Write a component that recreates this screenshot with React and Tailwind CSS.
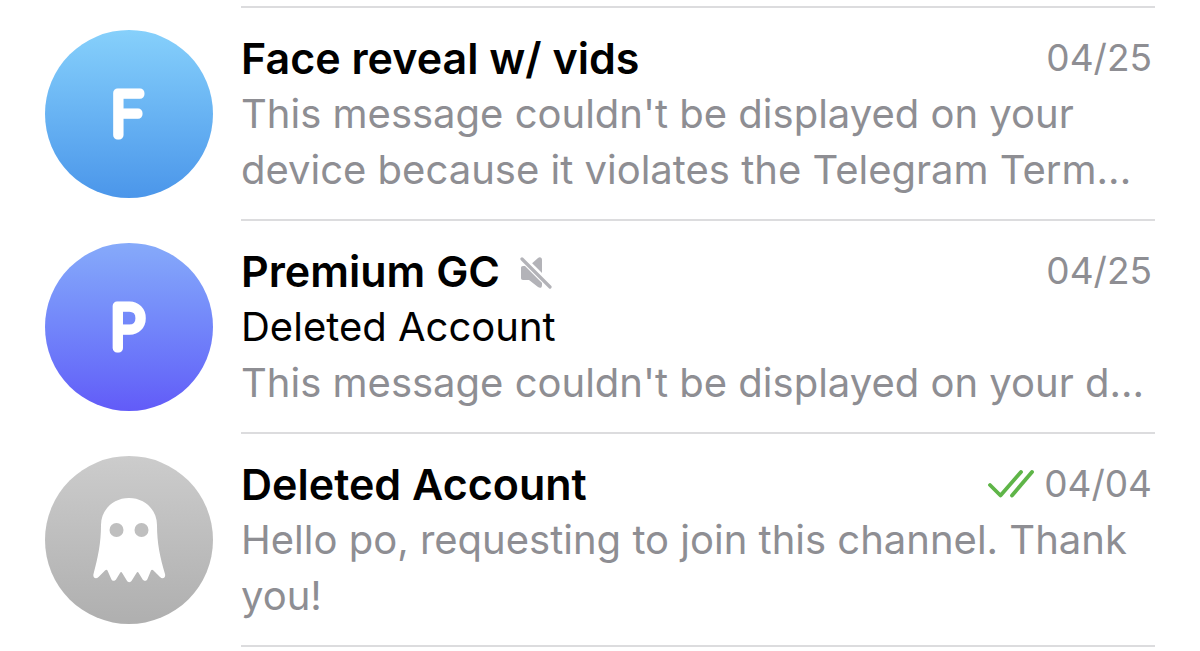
import React from "react";

const CHATS = [
  {
    id: 1,
    title: "Face reveal w/ vids",
    date: "04/25",
    letter: "F",
    avatar: "from-[#86d0fb] to-[#4b96ea]",
    message:
      "This message couldn't be displayed on your device because it violates the Telegram Term...",
  },
  {
    id: 2,
    title: "Premium GC",
    date: "04/25",
    letter: "P",
    avatar: "from-[#86aafa] to-[#625bf8]",
    sender: "Deleted Account",
    message: "This message couldn't be displayed on your d...",
    muted: true,
  },
  {
    id: 3,
    title: "Deleted Account",
    date: "04/04",
    avatar: "from-[#cccccc] to-[#afafaf]",
    message: "Hello po, requesting to join this channel. Thank you!",
    read: true,
  },
];

/* ---------- ICONS ---------- */
const GhostIcon = () => (
  <svg viewBox="0 0 168 168" className="h-full w-full" aria-hidden="true">
    <path
      d="M84 42C68 42 56 54 56 69C56 87 53 101 48.500 118C47.500 122 51 123.500 53.500 121L60 114.500C61 113.300 62 113.400 62.500 114.500L66 122.500C67 125.500 70 125.500 71.500 122.700L75 117C75.700 115.800 76.500 115.800 77.200 117L81.800 124.500C83 126.700 85.500 126.700 86.800 124.500L91.500 117C92.200 115.800 93 115.800 93.700 117L97.200 122.700C98.700 125.500 101.700 125.500 102.700 122.500L106 114.500C106.500 113.400 107.500 113.300 108.500 114.500L115 121C117.500 123.500 121 122 120 118C115 101 112 87 112 69C112 54 100 42 84 42Z"
      fill="#fff"
    />
    <circle cx="71.500" cy="74" r="7" fill="#bfbfbf" />
    <circle cx="96.500" cy="74" r="7" fill="#bfbfbf" />
  </svg>
);

const MutedIcon = () => (
  <svg viewBox="0 0 32 38" className="h-[38px] w-8 shrink-0" role="img" aria-label="Muted">
    <path
      d="M3 14H9L18 6C19.500 4.600 22 5 22 8V33C22 36 20 36.500 18 35L9 28H3C1.700 28 1 27.300 1 26V16C1 14.700 1.700 14 3 14Z"
      fill="#b3b3b8"
    />
    <path d="M0 4L32 36" stroke="#fff" strokeWidth="7" />
    <path d="M2 7L30 35" stroke="#b3b3b8" strokeWidth="3.200" strokeLinecap="round" />
  </svg>
);

const ReadIcon = () => (
  <svg viewBox="0 0 46 28" className="h-7 w-[46px] shrink-0" role="img" aria-label="Read">
    <g fill="none" stroke="#5fb548" strokeWidth="3.800" strokeLinecap="round" strokeLinejoin="round">
      <path d="M2 15L12.500 25.500L33 2" />
      <path d="M24 25.500L44 2" />
    </g>
  </svg>
);

/* ---------- AVATAR ---------- */
const Avatar = ({ chat }) => (
  <div className={`size-[168px] shrink-0 overflow-hidden rounded-full bg-linear-to-b ${chat.avatar}`}>
    {chat.letter ? (
      // thick round stroke on a thin weight gives the rounded initials
      <svg viewBox="0 0 168 168" className="h-full w-full">
        <text
          x="83"
          y="105"
          textAnchor="middle"
          fontSize="57"
          fontWeight="100"
          fill="#fff"
          stroke="#fff"
          strokeWidth="9"
          strokeLinejoin="round"
        >
          {chat.letter}
        </text>
      </svg>
    ) : (
      <GhostIcon />
    )}
  </div>
);

const ChatRow = ({ chat }) => (
  <li className="flex gap-7 pl-[45px]">
    <div className="pt-[22px]">
      <Avatar chat={chat} />
    </div>

    <div className="mr-[45px] min-w-0 flex-1 border-b-2 border-[#dcdcde] pt-[22px] pb-[21px] text-[40px] leading-14 text-[#8e8e93]">
      <div className="flex items-center gap-5 pr-[3px]">
        <h2 className="truncate text-[43px] font-semibold text-black">{chat.title}</h2>
        {chat.muted && <MutedIcon />}
        <div className="ml-auto flex shrink-0 items-center gap-2.5">
          {chat.read && <ReadIcon />}
          <time className="text-[37px]">{chat.date}</time>
        </div>
      </div>
      {chat.sender && <p className="truncate text-black">{chat.sender}</p>}
      <p>{chat.message}</p>
    </div>
  </li>
);

const App = () => {
  return (
    <main className="min-h-screen bg-white pt-[6px] font-['Inter',sans-serif]">
      <div className="mr-[45px] ml-[241px] border-t-2 border-[#dcdcde]"></div>
      <ul>
        {CHATS.map((chat) => (
          <ChatRow key={chat.id} chat={chat} />
        ))}
      </ul>
    </main>
  );
};

export default App;
